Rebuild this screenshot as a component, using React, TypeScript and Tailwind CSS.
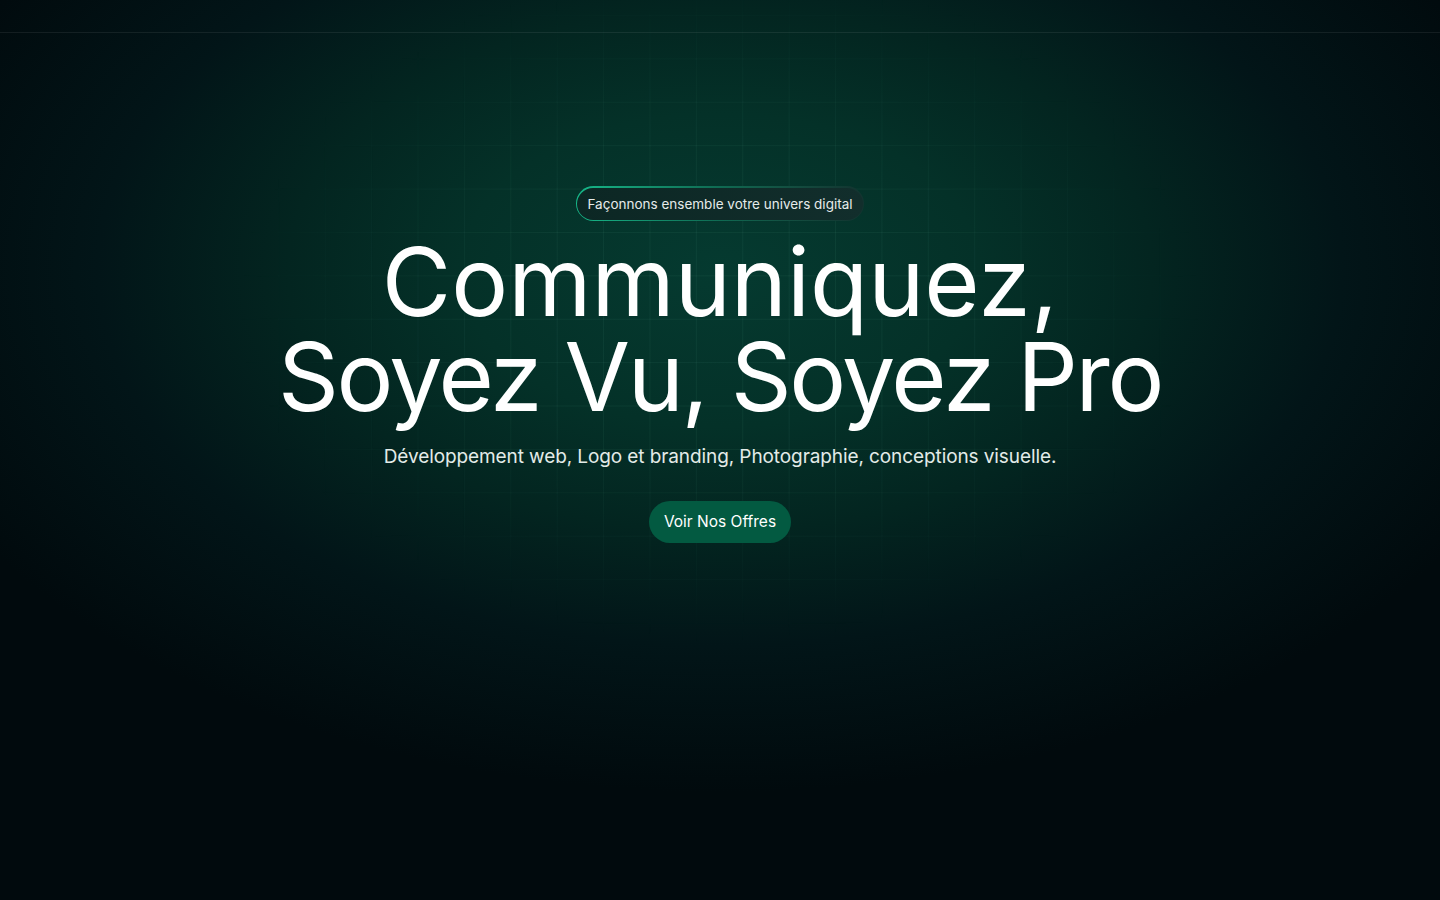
import React from "react";

const font = { fontFamily: "Inter, 'Noto Sans', sans-serif" };

function Header() {
  return <header className="h-[33px] w-full border-b border-white/[0.07]" />;
}

function Badge() {
  return (
    <div className="rounded-full bg-gradient-to-r from-[#16b889] via-[#0f6a52] to-[#12332f] p-[1.5px]">
      <div className="rounded-full bg-gradient-to-r from-[#0c2724] to-[#122e2c] px-[10px] py-[6px] text-[13.5px] leading-[20px] text-[#e6ebea]">
        Façonnons ensemble votre univers digital
      </div>
    </div>
  );
}

function App() {
  return (
    <div style={font} className="relative min-h-[900px] w-full overflow-hidden bg-[#010a0d]">
      {/* glow */}
      <div className="pointer-events-none absolute inset-0 bg-[radial-gradient(ellipse_60%_58%_at_50%_30%,#053a30_0%,#043128_30%,#032520_50%,#021518_72%,transparent_100%)]" />
      {/* grid */}
      <div className="pointer-events-none absolute inset-0 bg-[linear-gradient(to_right,rgba(120,200,170,0.07)_1px,transparent_1px),linear-gradient(to_bottom,rgba(120,200,170,0.07)_1px,transparent_1px)] bg-[size:46.4px_43.4px] bg-[position:0px_15px] [mask-image:radial-gradient(ellipse_34%_38%_at_50%_34%,black_40%,transparent_100%)]" />

      <div className="relative">
        <Header />
        <main className="flex flex-col items-center pt-[153px] text-center">
          <Badge />
          <h1 className="mt-[13px] flex flex-col text-[95px] font-normal leading-[95px] text-white">
            <span className="tracking-[0em]">Communiquez,</span>
            <span className="tracking-[-0.025em]">Soyez Vu, Soyez Pro</span>
          </h1>
          <p className="mt-[19px] text-[19px] leading-[28px] tracking-[-0.005em] text-[#e3ebe8]">
            Développement web, Logo et branding, Photographie, conceptions visuelle.
          </p>
          <button className="mt-[30px] h-[42px] rounded-full bg-[#035a41] px-[15px] text-[15.5px] text-white">
            Voir Nos Offres
          </button>
        </main>
      </div>
    </div>
  );
}

export default App;
